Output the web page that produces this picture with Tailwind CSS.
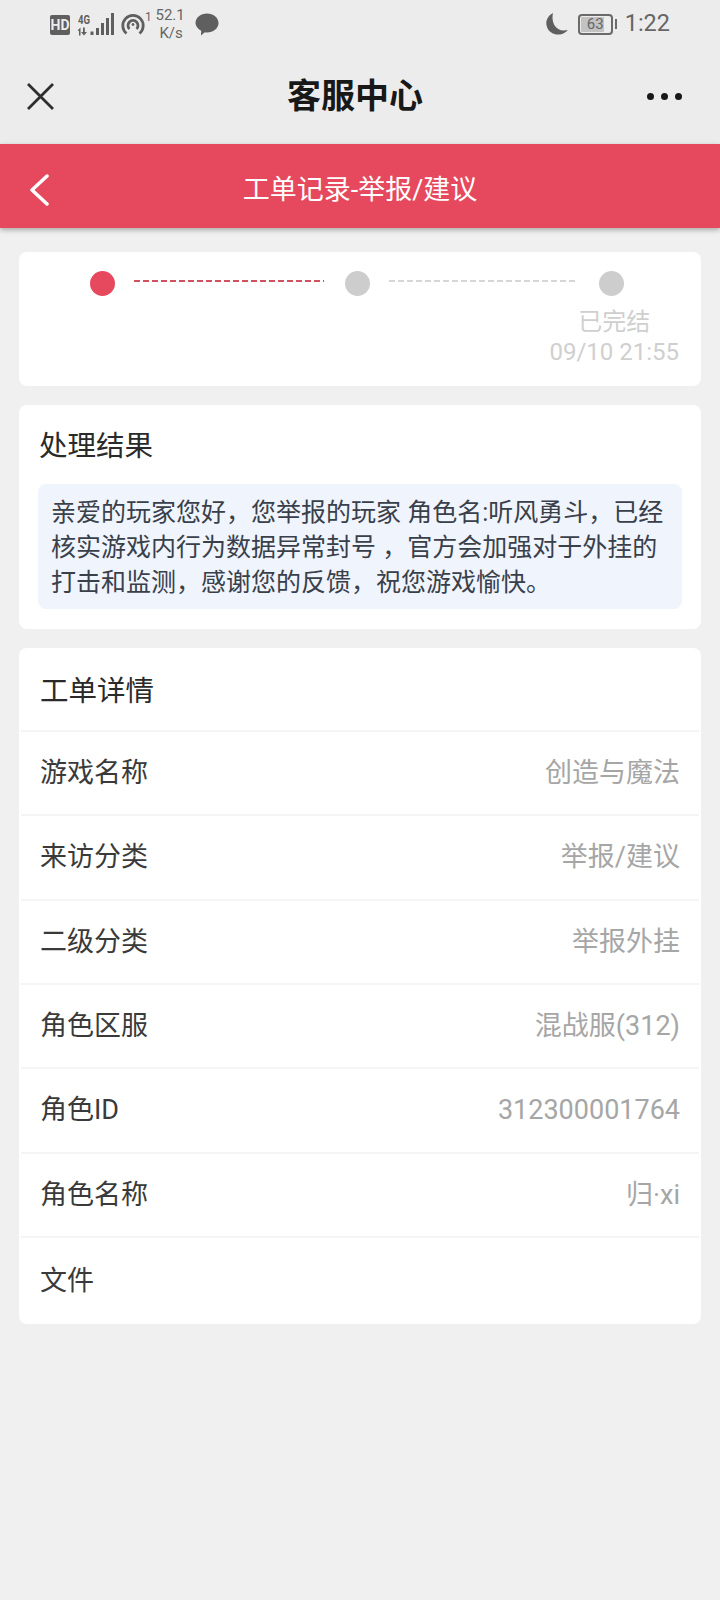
<!DOCTYPE html>
<html lang="zh-CN">
<head>
  <meta charset="UTF-8">
  <meta name="viewport" content="width=device-width, initial-scale=1.0">
  <title>客服中心</title>
  <script src="https://cdn.jsdelivr.net/npm/@tailwindcss/browser@4"></script>
</head>
<body class="bg-[#f0f0f0] font-['Roboto','Noto_Sans_CJK_SC',sans-serif] w-[720px] h-[1600px] overflow-hidden">
  <!-- Status bar + WeChat nav -->
  <div class="bg-[#ececec] h-[144px]">
    <div class="h-[50px] flex items-start justify-between pl-[50px] pr-[50px] pt-[12px] text-[#666]">
      <div class="flex items-start">
        <div class="mt-[3px] w-[20px] h-[20px] rounded-[2px] bg-[#5f5f5f] text-[#ececec] text-[14px] font-bold flex items-center justify-center leading-none">HD</div>
        <svg class="ml-[6px]" width="38" height="24" viewBox="0 0 38 24" fill="#5f5f5f">
          <rect x="14.500" y="19.500" width="3" height="3.500"/><rect x="20" y="16" width="3" height="7"/><rect x="25" y="11" width="3" height="12"/><rect x="30" y="6" width="3" height="17"/><rect x="35" y="1" width="3" height="22"/>
          <path d="M1.500 18.500l3-3v8H3v-4.500zM7 15.500h1.800v4.500h2.200l-3 3.500L5 20h2z"/>
          <text x="2" y="12" font-size="13" font-weight="700" font-family="Roboto" textLength="12" lengthAdjust="spacingAndGlyphs">4G</text>
        </svg>
        <svg class="ml-[7px] mt-[1px]" width="24" height="23" viewBox="0 0 24 23" fill="none" stroke="#5f5f5f" stroke-width="2.800">
          <path d="M5.500 20.500A10.200 10.200 0 1 1 18.500 20.500"/><path d="M8.500 16A5 5 0 1 1 15.500 16"/><circle cx="12" cy="11.500" r="1" fill="#5f5f5f" stroke-width="1"/>
        </svg>
        <span class="text-[12px] leading-none -mt-[1px]">1</span>
        <div class="-ml-[3px] text-[15px] leading-[18px] text-right w-[36px] -mt-[6px]">52.1<br><span class="mr-[2px]">K/s</span></div>
        <svg class="ml-[10px] mt-[1px]" width="24" height="23" viewBox="0 0 24 23" fill="#5f5f5f">
          <path d="M12 0.500c6.200 0 11.500 3.900 11.500 9.500s-5.300 9.500-11.500 9.500c-.8 0-1.500-.1-2.200-.2L6 22.500l.2-4.700C2.800 16 0.500 13 0.500 10 0.500 4.400 5.800 0.500 12 0.500z"/>
        </svg>
      </div>
      <div class="flex items-center">
        <svg width="24" height="24" viewBox="0 0 24 24" fill="#5f5f5f">
          <path d="M8 1C2.500 4 0 9 2 15c2 6 9 9 15 7 2.500-.8 4.500-2.300 5.800-4-6 1.500-11-.5-13.500-5C7.500 9.500 7 5 8 1z"/>
        </svg>
        <div class="ml-[9px] w-[35px] h-[21px] rounded-[4px] border-2 border-[#6a6a6a] p-[1px] relative flex">
          <div class="w-[23px] bg-[#c2c2c2] rounded-[1px]"></div>
          <span class="absolute inset-0 flex items-center justify-center text-[15px] leading-none">63</span>
        </div>
        <div class="ml-[2px] w-[2px] h-[10px] bg-[#6a6a6a]"></div>
        <span class="ml-[8px] text-[23.500px] leading-none">1:22</span>
      </div>
    </div>
    <div class="h-[94px] flex items-center justify-between pl-[26px] pr-[38px] pb-[2px]">
      <svg width="29" height="29" viewBox="0 0 29 29" fill="none" stroke="#2e2e2e" stroke-width="2.800"><path d="M2 2l25 25M27 2L2 27"/></svg>
      <div class="ml-[8px] text-[34px] font-bold text-[#181818] leading-none">客服中心</div>
      <div class="flex gap-[7px]">
        <span class="w-[7px] h-[7px] rounded-full bg-[#181818]"></span>
        <span class="w-[7px] h-[7px] rounded-full bg-[#181818]"></span>
        <span class="w-[7px] h-[7px] rounded-full bg-[#181818]"></span>
      </div>
    </div>
  </div>

  <!-- Red header -->
  <div class="relative h-[84px] bg-[#e6495d] shadow-[0_2px_5px_rgba(0,0,0,0.3)] flex items-center justify-center">
    <svg class="absolute left-[29px] top-[30px]" width="22" height="32" viewBox="0 0 22 32" fill="none" stroke="#fff" stroke-width="3.500" stroke-linecap="round" stroke-linejoin="round"><path d="M18 2L3 16l15 14"/></svg>
    <div class="text-[27px] text-white leading-none mt-[9px]">工单记录-举报/建议</div>
  </div>

  <div class="px-[19px] pt-[24px]">
    <!-- Progress -->
    <div class="bg-white rounded-[8px] h-[134px] pt-[19px]">
      <div class="flex items-start pl-[71px]">
        <span class="w-[25px] h-[25px] rounded-full bg-[#e6495d]"></span>
        <span class="mt-[9px] ml-[19px] w-[190px] h-[2px] bg-[repeating-linear-gradient(90deg,#d0525f_0,#d0525f_6px,transparent_6px,transparent_9px)]"></span>
        <span class="ml-[21px] w-[25px] h-[25px] rounded-full bg-[#cdcdcd]"></span>
        <span class="mt-[9px] ml-[19px] w-[189px] h-[2px] bg-[repeating-linear-gradient(90deg,#d6d6d6_0,#d6d6d6_6px,transparent_6px,transparent_9px)]"></span>
        <span class="ml-[21px] w-[25px] h-[25px] rounded-full bg-[#cdcdcd]"></span>
      </div>
      <div class="flex justify-end pr-[22px] mt-[11px]">
        <div class="text-center text-[#cfcfcf] text-[24px] leading-[30px]">已完结<br>09/10 21:55</div>
      </div>
    </div>

    <!-- Result -->
    <div class="mt-[19px] bg-white rounded-[8px] h-[224px] px-[19px] pt-[22px]">
      <div class="pl-[1px] text-[28.500px] leading-[40px] text-[#2a2a2a]">处理结果</div>
      <div class="mt-[17px] bg-[#f0f4fd] rounded-[8px] h-[125px] pl-[13px] pt-[11px] text-[25px] leading-[35px] text-[#39404a]">亲爱的玩家您好，您举报的玩家 角色名:听风勇斗，已经<br>核实游戏内行为数据异常封号 ，官方会加强对于外挂的<br>打击和监测，感谢您的反馈，祝您游戏愉快。</div>
    </div>

    <!-- Ticket details -->
    <div class="mt-[19px] bg-white rounded-[8px] px-[2px] text-[27px]">
      <div class="h-[82px] flex items-center px-[19px] pt-[6px] text-[#2a2a2a] text-[28.500px]">工单详情</div>
      <div class="h-[84.330px] flex items-center justify-between px-[19px] border-t-2 border-[#f5f5f5]"><span class="text-[#3a3a3a]">游戏名称</span><span class="text-[#a6a6a6]">创造与魔法</span></div>
      <div class="h-[84.330px] flex items-center justify-between px-[19px] border-t-2 border-[#f5f5f5]"><span class="text-[#3a3a3a]">来访分类</span><span class="text-[#a6a6a6]">举报/建议</span></div>
      <div class="h-[84.330px] flex items-center justify-between px-[19px] border-t-2 border-[#f5f5f5]"><span class="text-[#3a3a3a]">二级分类</span><span class="text-[#a6a6a6]">举报外挂</span></div>
      <div class="h-[84.330px] flex items-center justify-between px-[19px] border-t-2 border-[#f5f5f5]"><span class="text-[#3a3a3a]">角色区服</span><span class="text-[#a6a6a6]">混战服(312)</span></div>
      <div class="h-[84.330px] flex items-center justify-between px-[19px] border-t-2 border-[#f5f5f5]"><span class="text-[#3a3a3a]">角色ID</span><span class="text-[#a6a6a6]">312300001764</span></div>
      <div class="h-[84.330px] flex items-center justify-between px-[19px] border-t-2 border-[#f5f5f5]"><span class="text-[#3a3a3a]">角色名称</span><span class="text-[#a6a6a6]">归·xi</span></div>
      <div class="h-[88px] flex items-center justify-between px-[19px] border-t-2 border-[#f5f5f5]"><span class="text-[#3a3a3a]">文件</span></div>
    </div>
  </div>
</body>
</html>
